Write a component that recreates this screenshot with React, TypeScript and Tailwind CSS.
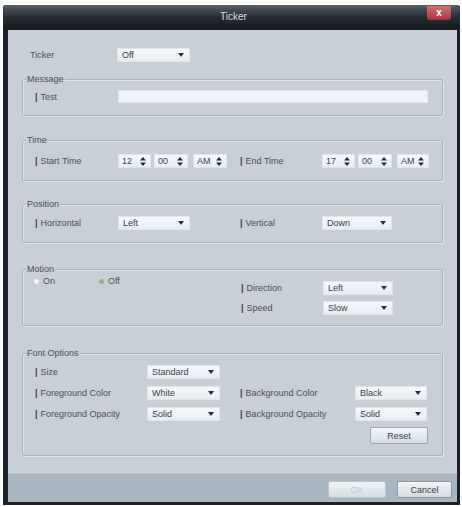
import React from "react";

const Arrow = () => (
  <svg width="6" height="4" viewBox="0 0 6 4" className="shrink-0">
    <path d="M0 0 L6 0 L3 4 Z" fill="#2a2e33" />
  </svg>
);

const SpinArrow = () => (
  <svg width="6" height="9" viewBox="0 0 6 9" className="shrink-0">
    <path d="M0 3.5 L6 3.5 L3 0 Z" fill="#2a2e33" />
    <path d="M0 5.5 L6 5.5 L3 9 Z" fill="#2a2e33" />
  </svg>
);

function Select({ value, w }: { value: string; w: string }) {
  return (
    <div
      className={`${w} h-[14px] flex items-center justify-between pl-[4px] pr-[5px] bg-gradient-to-b from-[#f6f9fb] to-[#e6edf3] border border-[#dde4ea] text-[9px] leading-[10px] text-[#3a3e43]`}
    >
      <span>{value}</span>
      <Arrow />
    </div>
  );
}

function Spin({ value, w }: { value: string; w: string }) {
  return (
    <div
      className={`${w} h-[14px] flex items-center justify-between pl-[3px] pr-[4px] bg-gradient-to-b from-[#f6f9fb] to-[#e6edf3] border border-[#dde4ea] text-[9px] leading-[10px] text-[#3a3e43]`}
    >
      <span>{value}</span>
      <SpinArrow />
    </div>
  );
}

function Label({ text, w }: { text: string; w: string }) {
  return (
    <div className={`${w} shrink-0 text-[9px] leading-[10px] text-[#4a4f54] whitespace-nowrap`}>
      <span className="font-bold mr-[3px] text-[#3a3e43]">|</span>
      {text}
    </div>
  );
}

function Group({
  title,
  h,
  mt,
  children,
}: {
  title: string;
  h: string;
  mt: string;
  children: React.ReactNode;
}) {
  return (
    <div
      className={`${h} ${mt} mx-[14px] border border-[#aab3bc] rounded-[2px] shadow-[inset_1px_1px_0_#dfe4e9,1px_1px_0_#dfe4e9] flex flex-col`}
    >
      <div className="-mt-[6px] ml-[3px] w-fit px-[1px] bg-[#c8cfd7] text-[9px] leading-[10px] text-[#4a4f54]">
        {title}
      </div>
      {children}
    </div>
  );
}

function Radio({ label, checked }: { label: string; checked?: boolean }) {
  return (
    <div className="flex items-center gap-[4px] text-[9px] leading-[10px] text-[#4a4f54]">
      <span
        className={`w-[5px] h-[5px] rounded-full ${checked ? "bg-[#9db07a]" : "bg-[#f4f6f8]"}`}
      />
      <span>{label}</span>
    </div>
  );
}

export default function App() {
  return (
    <div className="w-[462px] h-[507px] bg-white pt-[5px] pl-[3px] font-['Liberation_Sans','DejaVu_Sans',sans-serif]">
      <div className="w-[457px] h-[500px] bg-[#1b2128] rounded-t-[3px] flex flex-col pl-[5px] pr-[3px] pb-[3px]">
        {/* Title bar */}
        <div className="h-[25px] -ml-[5px] -mr-[3px] flex items-start justify-center relative rounded-t-[3px] bg-gradient-to-b from-[#5a6068] via-[#252b32] to-[#161b21]">
          <div className="mt-[7px] ml-[4px] text-[10px] leading-[10px] text-[#d8dce0]">Ticker</div>
          <div className="absolute right-[9px] top-[1px] w-[24px] h-[14px] rounded-b-[3px] bg-gradient-to-b from-[#d07078] to-[#a8323c] flex items-center justify-center text-[10px] leading-[10px] font-bold text-white">
            x
          </div>
        </div>
        {/* Content */}
        <div className="flex-1 bg-[#c8cfd7] flex flex-col">
          <div className="flex-1 flex flex-col">
            {/* Ticker row */}
            <div className="mt-[18px] flex items-center pl-[22px]">
              <div className="w-[87px] text-[9px] leading-[10px] text-[#4a4f54]">Ticker</div>
              <Select value="Off" w="w-[73px]" />
            </div>

            <Group title="Message" h="h-[37px]" mt="mt-[17px]">
              <div className="mt-[6px] flex items-center pl-[12px]">
                <Label text="Test" w="w-[83px]" />
                <div className="w-[310px] h-[13px] bg-[#eef4f9] border border-[#dfe6ec]" />
              </div>
            </Group>

            <Group title="Time" h="h-[41px]" mt="mt-[24px]">
              <div className="mt-[9px] flex items-center pl-[12px]">
                <Label text="Start Time" w="w-[83px]" />
                <Spin value="12" w="w-[33px]" />
                <div className="w-[3px]" />
                <Spin value="00" w="w-[34px]" />
                <div className="w-[5px]" />
                <Spin value="AM" w="w-[34px]" />
                <div className="w-[13px]" />
                <Label text="End Time" w="w-[82px]" />
                <Spin value="17" w="w-[33px]" />
                <div className="w-[3px]" />
                <Spin value="00" w="w-[34px]" />
                <div className="w-[5px]" />
                <Spin value="AM" w="w-[32px]" />
              </div>
            </Group>

            <Group title="Position" h="h-[39px]" mt="mt-[23px]">
              <div className="mt-[7px] flex items-center pl-[12px]">
                <Label text="Horizontal" w="w-[83px]" />
                <Select value="Left" w="w-[72px]" />
                <div className="w-[50px]" />
                <Label text="Vertical" w="w-[82px]" />
                <Select value="Down" w="w-[70px]" />
              </div>
            </Group>

            <Group title="Motion" h="h-[57px]" mt="mt-[26px]">
              <div className="flex items-start pl-[11px]">
                <div className="mt-[2px] w-[207px] flex items-center">
                  <div className="w-[65px]">
                    <Radio label="On" />
                  </div>
                  <Radio label="Off" checked />
                </div>
                <div className="mt-[7px] flex flex-col gap-[6px]">
                  <div className="flex items-center">
                    <Label text="Direction" w="w-[82px]" />
                    <Select value="Left" w="w-[70px]" />
                  </div>
                  <div className="flex items-center">
                    <Label text="Speed" w="w-[82px]" />
                    <Select value="Slow" w="w-[70px]" />
                  </div>
                </div>
              </div>
            </Group>

            <Group title="Font Options" h="h-[103px]" mt="mt-[27px]">
              <div className="mt-[7px] flex flex-col gap-[7px] pl-[12px]">
                <div className="flex items-center">
                  <Label text="Size" w="w-[112px]" />
                  <Select value="Standard" w="w-[73px]" />
                </div>
                <div className="flex items-center">
                  <Label text="Foreground Color" w="w-[112px]" />
                  <Select value="White" w="w-[73px]" />
                  <div className="w-[20px]" />
                  <Label text="Background Color" w="w-[115px]" />
                  <Select value="Black" w="w-[72px]" />
                </div>
                <div className="flex items-center">
                  <Label text="Foreground Opacity" w="w-[112px]" />
                  <Select value="Solid" w="w-[73px]" />
                  <div className="w-[20px]" />
                  <Label text="Background Opacity" w="w-[115px]" />
                  <Select value="Solid" w="w-[72px]" />
                </div>
              </div>
              <div className="mt-[6px] flex justify-end pr-[14px]">
                <div className="w-[58px] h-[17px] flex items-center justify-center rounded-[2px] border border-[#9aa5af] bg-gradient-to-b from-[#f4f7fa] to-[#d6dee5] text-[9px] leading-[10px] text-[#3a3e43]">
                  Reset
                </div>
              </div>
            </Group>
          </div>
          {/* Footer */}
          <div className="h-[29px] bg-[#a9b5bf] border-t border-[#b9c3cb] flex items-start justify-end pr-[5px] pt-[7px] gap-[11px]">
            <div className="w-[58px] h-[17px] flex items-center justify-center rounded-[2px] border border-[#b8c3cb] bg-gradient-to-b from-[#eef3f6] to-[#d4dde3] text-[9px] leading-[10px] text-[#c4ccd2]">
              OK
            </div>
            <div className="w-[55px] h-[17px] flex items-center justify-center rounded-[2px] border border-[#8c98a3] bg-gradient-to-b from-[#f2f5f8] to-[#d3dbe2] text-[9px] leading-[10px] text-[#3a3e43]">
              Cancel
            </div>
          </div>
        </div>
      </div>
    </div>
  );
}
